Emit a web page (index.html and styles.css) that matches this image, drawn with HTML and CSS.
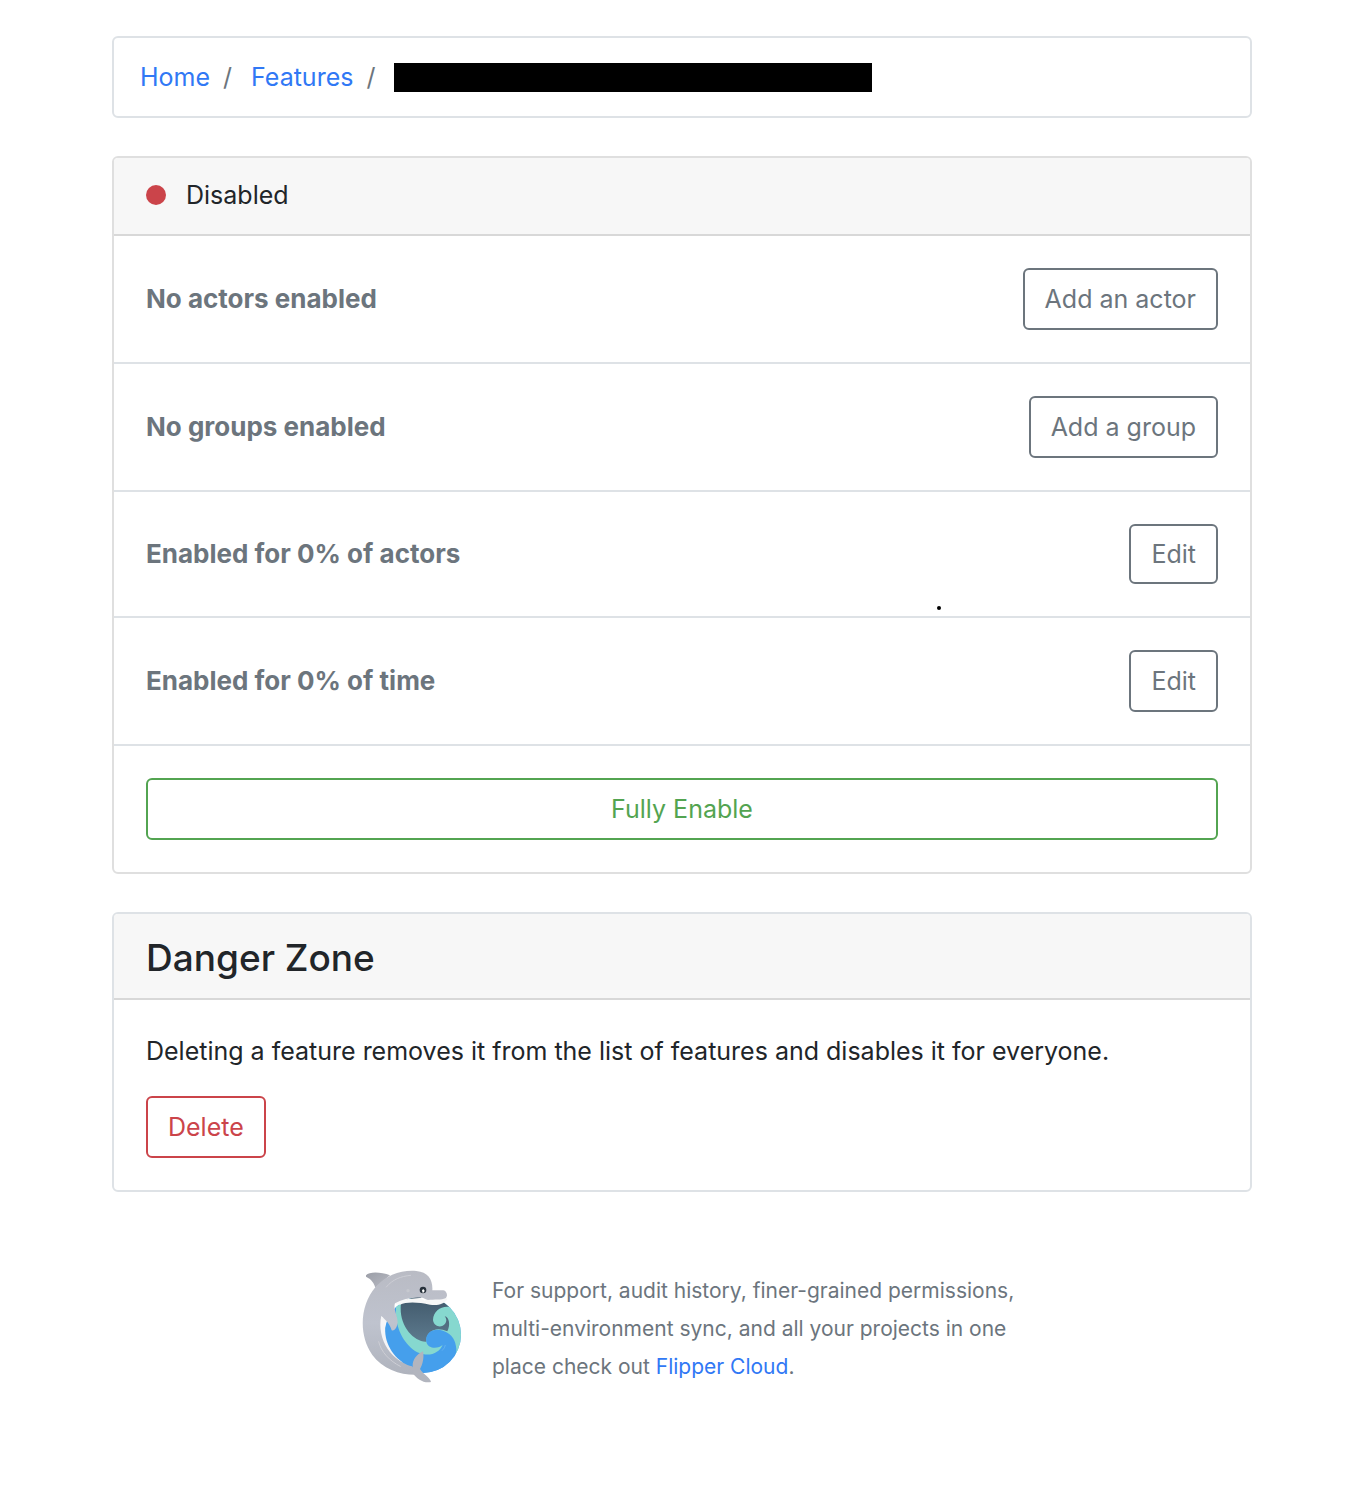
FILE: index.html
```html
<!DOCTYPE html>
<html lang="en">
<head>
<meta charset="utf-8">
<meta name="viewport" content="width=device-width, initial-scale=1">
<title>Flipper</title>
<link rel="stylesheet" href="styles.css">
</head>
<body>
<div class="container">
  <nav class="breadcrumb" aria-label="Breadcrumb">
    <ol class="crumbs">
      <li class="crumb"><a href="#">Home</a></li>
      <li class="crumb"><a href="#">Features</a></li>
      <li class="crumb"><span class="redacted"></span></li>
    </ol>
  </nav>

  <main class="sections">
    <section class="card">
      <div class="card-header status"><span class="status-dot"></span>Disabled</div>
      <div class="row"><strong>No actors enabled</strong><button class="btn" type="button">Add an actor</button></div>
      <div class="row"><strong>No groups enabled</strong><button class="btn" type="button">Add a group</button></div>
      <div class="row row-compact"><strong>Enabled for 0% of actors</strong><button class="btn" type="button">Edit</button><span class="speck"></span></div>
      <div class="row"><strong>Enabled for 0% of time</strong><button class="btn" type="button">Edit</button></div>
      <div class="row"><button class="btn btn-success" type="button">Fully Enable</button></div>
    </section>

    <section class="card card-danger">
      <div class="card-header card-header-title"><h2 class="title">Danger Zone</h2></div>
      <div class="card-body">
        <p class="description">Deleting a feature removes it from the list of features and disables it for everyone.</p>
        <button class="btn btn-danger" type="button">Delete</button>
      </div>
    </section>
  </main>

  <footer class="footer">
    <svg class="logo" viewBox="36 30 300 342" role="img" aria-label="Flipper">
      <defs>
        <linearGradient id="skin" x1="0" y1="0" x2="0" y2="1"><stop offset="0" stop-color="#b9bbc4"/><stop offset=".5" stop-color="#bfc3ce"/><stop offset="1" stop-color="#afb3bd"/></linearGradient>
        <linearGradient id="fin" x1="0" y1="0" x2="1" y2="1"><stop offset="0" stop-color="#9b9ea7"/><stop offset="1" stop-color="#b8bac3"/></linearGradient>
        <linearGradient id="deep" x1="0" y1="0" x2="0" y2="1"><stop offset="0" stop-color="#41596b"/><stop offset="1" stop-color="#5d7a8e"/></linearGradient>
        <clipPath id="disc"><circle cx="218" cy="224" r="115"/></clipPath>
      </defs>
      <g clip-path="url(#disc)">
        <rect x="98" y="100" width="240" height="245" fill="#459fec"/>
        <path d="M138 110H336V340H326C334 282 300 262 278 264C266 285 232 293 202 277C165 257 135 207 138 150Z" fill="#86d8cf"/>
        <path d="M153 110H320L312 146C285 131 250 148 249 180C252 205 286 206 289 181C289 175 286 171 284 169C298 171 302 196 292 214C258 198 227 214 229 245C194 247 151 202 152 145Z" fill="url(#deep)"/>
        <path d="M229 246C224 218 250 202 279 212C309 222 317 244 319 266C320 300 292 338 220 342L205 278C239 292 269 278 278 254C268 265 236 270 229 246Z" fill="#459fec"/>
        <path d="M276 272Q285 264 286 255" fill="none" stroke="#6fb8f2" stroke-width="2"/>
      </g>
      <path d="M48 46C58 34 94 36 120 46L76 83C70 62 58 55 48 50Z" fill="url(#fin)"/>
      <path d="M135 132L150 134C168 125 205 126 240 134C260 138 284 133 292 118L283 107L142 120Z" fill="#f7f7f7"/>
      <path d="M90 170L110 178C96 225 115 278 159 308L140 306C96 278 83 218 90 170Z" fill="#f5f5f7"/>
      <path d="M76 82C108 45 155 29 199 33C235 36 249 60 247 91L280 91C291 93 295 109 286 115C276 121 252 118 234 120L216 113C188 110 160 116 135 130C128 147 147 174 142 193C139 207 132 214 125 211C119 191 110 183 94 168C84 210 100 257 128 285C147 304 169 315 186 319L208 344C160 348 99 330 67 285C23 222 32 133 76 82Z" fill="url(#skin)"/>
      <path d="M188 318C187 300 201 282 219 274C223 292 218 314 210 327C220 344 240 352 243 366C222 371 201 357 190 342Z" fill="#b2b5be"/>
      <path d="M109 81C128 58 152 49 182 46M86 245C93 276 119 303 151 319" fill="none" stroke="#cdced5" stroke-width="3" stroke-linecap="round"/>
      <circle cx="174" cy="92" r="5" fill="#c6c8cf"/>
      <circle cx="219" cy="90" r="10" fill="#27313b"/>
      <path d="M216 91L220 87L224 92Q222 99 218 98Z" fill="#fff"/>
      <path d="M214 113Q220 118 226 120" fill="none" stroke="#fff" stroke-width="4"/>
    </svg>
    <p class="support">For support, audit history, finer-grained permissions, multi-environment sync, and all your projects in one place check out <a href="#">Flipper Cloud</a>.</p>
  </footer>
</div>
</body>
</html>
```
FILE: styles.css
```css
* { box-sizing: border-box; }

body {
  margin: 0;
  background: #fff;
  color: #212529;
  font: 25px/38px Inter, "Liberation Sans", sans-serif;
}

a { color: #3078f5; text-decoration: none; }

.container { padding: 36px 98px 96px 112px; }

.breadcrumb {
  margin-bottom: 38px;
  padding: 20px 26px;
  border: 2px solid #dee2e6;
  border-radius: 6px;
}

.crumbs {
  display: flex;
  align-items: center;
  margin: 0;
  padding: 0;
  list-style: none;
}

.crumb { display: flex; align-items: center; }

.crumb + .crumb::before {
  content: "/";
  padding: 0 19px 0 13px;
  color: #6c757d;
}

.redacted { width: 478px; height: 29px; background: #000; }

.sections { display: grid; gap: 38px; }

.card { border: 2px solid #dfdfdf; border-radius: 6px; }
.card-danger { border-color: #dee2e6; }

.card-header {
  background: #f7f7f7;
  border-bottom: 2px solid #d8d8d8;
  border-radius: 4px 4px 0 0;
}

.card-header-title { padding: 22px 32px 18px; }

.status { display: flex; align-items: center; gap: 20px; padding: 18px 32px 20px; }
.status-dot { width: 20px; height: 20px; border-radius: 50%; background: #cb444a; }

.row {
  position: relative;
  display: flex;
  align-items: center;
  justify-content: space-between;
  padding: 32px;
  color: #6c757d;
}

.row strong { font-size: 26px; }

.row + .row { border-top: 2px solid #dee2e6; }

.btn {
  padding: 10px 20px;
  border: 2px solid #6c757d;
  border-radius: 6px;
  background: transparent;
  color: #6c757d;
  font: inherit;
}

.row-compact .btn { padding-block: 9px; }

.btn-success { flex: 1; border-color: #53a451; color: #53a451; }
.btn-danger { border-color: #cb444a; color: #cb444a; }

.speck {
  position: absolute;
  right: 309px;
  bottom: 6px;
  width: 4px;
  height: 4px;
  border-radius: 50%;
  background: #000;
}

.title { margin: 0; font-size: 37px; line-height: 44px; font-weight: 500; }

.card-body { padding: 32px; }
.description { margin: 0 0 26px; }

.footer {
  display: flex;
  align-items: center;
  justify-content: center;
  gap: 30px;
  margin-top: 76px;
  padding-left: 18px;
}

.logo { width: 100px; height: 114px; flex: none; }

.support {
  max-width: 528px;
  margin: 4px 0 0;
  color: #6c757d;
  font-size: 21px;
}
```
